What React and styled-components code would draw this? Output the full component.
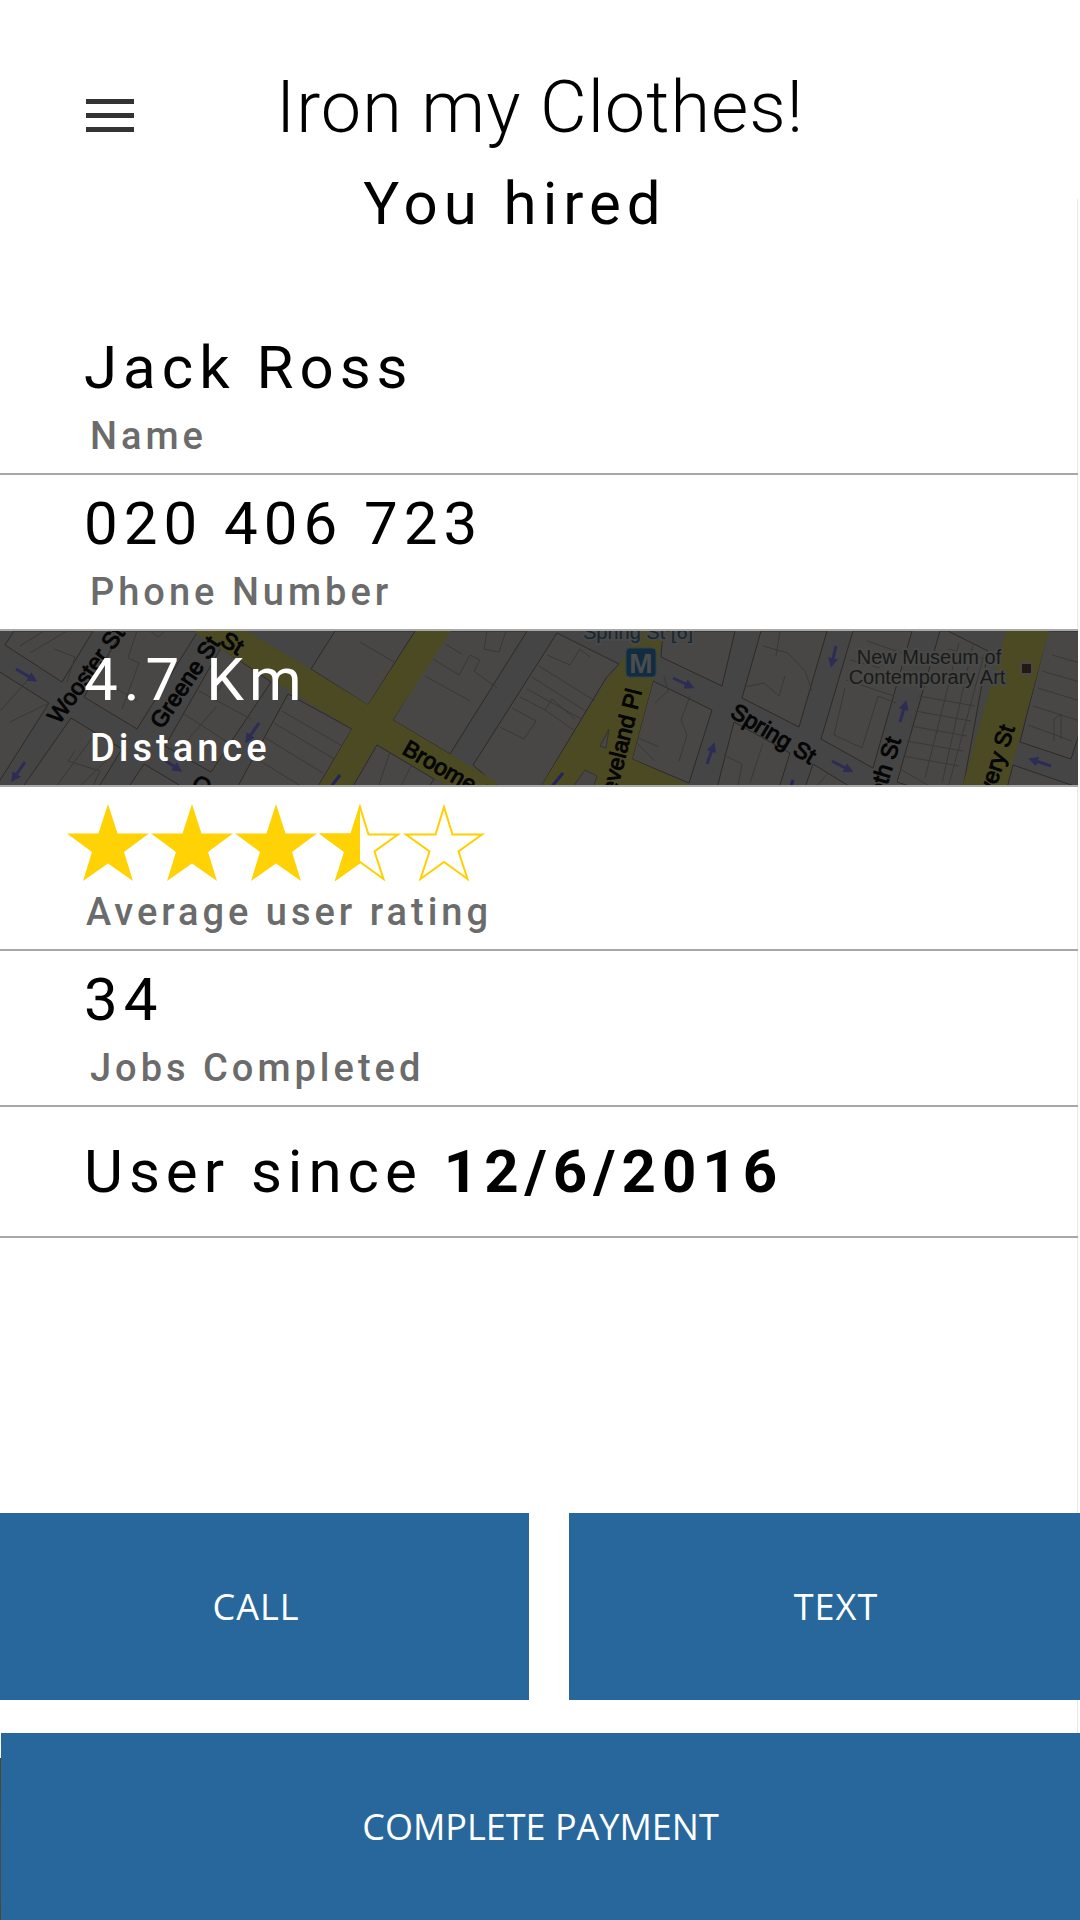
import React from 'react';
import styled, { createGlobalStyle } from 'styled-components';

const GlobalStyle = createGlobalStyle`
  *, *::before, *::after { box-sizing: border-box; }
  body { margin: 0; background: #fff; color: #000; font-family: Roboto, "Liberation Sans", sans-serif; }
  h1, h2, dl, dt, dd, p { margin: 0; }
`;

const Page = styled.div`
  display: flex;
  flex-direction: column;
  min-height: 100vh;
`;

const Header = styled.header`
  display: grid;
  grid-template-columns: 1fr auto 1fr;
  align-items: center;
  padding: 64px 86px 0;
`;

const MenuButton = styled.button`
  justify-self: start;
  display: flex;
  flex-direction: column;
  gap: 9px;
  width: 48px;
  margin-top: 14px;
  padding: 0;
  border: 0;
  background: none;
  cursor: pointer;
`;

const MenuBar = styled.span`
  display: block;
  width: 100%;
  height: 5px;
  background: #333;
`;

const AppName = styled.h1`
  font-size: 72px;
  font-weight: 300;
  line-height: 88px;
  letter-spacing: 1px;
  white-space: nowrap;
`;

const Main = styled.main`
  flex: 1;
  display: flex;
  flex-direction: column;
  background: linear-gradient(#e8e8e8, #e8e8e8) right 2px bottom / 1px calc(100% - 47px) no-repeat;
`;

const Status = styled.h2`
  padding: 16px 50px 79px 0;
  font-size: 60px;
  font-weight: 400;
  line-height: 72px;
  letter-spacing: 6px;
  text-align: center;
`;

const Details = styled.dl`
  padding-right: 2px;
`;

const Row = styled.div`
  position: relative;
  isolation: isolate;
  display: flex;
  flex-direction: column-reverse;
  gap: ${(p) => (p.$rating ? 0 : 6)}px;
  padding: ${(p) => (p.$rating ? '17px 84px 13px' : '11px 84px 13px')};
  border-bottom: 2px solid #a8a8a8;
  overflow: hidden;
  color: ${(p) => (p.$inverse ? '#fff' : '#000')};
`;

const Label = styled.dt`
  padding-left: ${(p) => (p.$flush ? 2 : 6)}px;
  color: ${(p) => (p.$inverse ? '#fff' : '#6b6b6b')};
  font-size: 38px;
  font-weight: 500;
  line-height: 48px;
  letter-spacing: 4px;
`;

const Value = styled.dd`
  font-size: 60px;
  line-height: 76px;
  letter-spacing: 6px;
`;

const Since = styled.p`
  padding: 27px 84px 26px;
  border-bottom: 2px solid #a8a8a8;
  margin-right: 2px;
  font-size: 60px;
  line-height: 76px;
  letter-spacing: 6px;
`;

const MapArt = styled.svg`
  position: absolute;
  z-index: -1;
  inset: 0;
  width: 100%;
  height: 100%;
`;

const Stars = styled.svg`
  display: block;
  width: 420px;
  height: 82px;
  margin: 0 0 2px -18px;
`;

const Actions = styled.div`
  display: grid;
  grid-template-columns: 529fr 511fr;
  gap: 33px 40px;
  margin-top: auto;
`;

const Action = styled.button`
  height: 187px;
  padding: ${(p) => p.$pad || '0'};
  border: 0;
  background: #28679c;
  color: #fff;
  font-family: "Open Sans", "Noto Sans", sans-serif;
  font-size: 36px;
  line-height: 48px;
  letter-spacing: ${(p) => (p.$wide ? 0 : 1)}px;
  cursor: pointer;
`;

const Footer = styled.div`
  grid-column: 1 / -1;
  display: grid;
  padding-left: 1px;
  background: linear-gradient(#4b491f, #4c4845 40%, #4b4845 85%, #4b491f) left bottom / 1px 162px no-repeat;
`;

const STAR = 'M41 0 L50.5 29.5 H82 L57 48 L66 77 L41 59.5 L16 77 L25 48 L0 29.5 H31.5 Z';
const STAR_LINE = 'M41 3 L49.5 30.5 H79 L55.5 47.5 L64.5 75 L41 58 L17.5 75 L26.5 47.5 L3 30.5 H32.5 Z';
const FILLS = [1, 1, 1, 0.5, 0];

function Rating() {
  return (
    <Stars viewBox="0 0 420 82" role="img" aria-label="3.5 out of 5 stars">
      <clipPath id="half"><rect x="0" y="0" width="41" height="82" /></clipPath>
      {FILLS.map((fill, i) => (
        <g key={i} transform={`translate(${1 + i * 84} 0)`}>
          {fill < 1 && <path d={STAR_LINE} fill="none" stroke="#ffd000" strokeWidth="2" />}
          {fill > 0 && <path d={STAR} fill="#ffd205" clipPath={fill < 1 ? 'url(#half)' : undefined} />}
        </g>
      ))}
    </Stars>
  );
}

const BLOCKS = [
  'M14 0 L5 14 L62 51 L93 0 Z',
  'M-5 38 L49 72 L-5 157 Z',
  'M122 0 L84 66 L137 98 L198 0 Z',
  'M71 87 L122 118 L98 157 L22 157 Z',
  'M221 17 L271 51 L211 141 L165 115 Z',
  'M144 133 L184 157 H128 Z',
  'M288 63 L352 98 L317 157 H237 Z',
  'M311 38 L335 0 H415 L368 74 Z',
  'M448 0 L393 89 L450 123 L527 0 Z',
  'M377 114 L434 148 L428 157 H352 Z',
  'M557 2 L619 33 L606 47 L540 157 H500 L473 134 Z',
  'M663 0 L661 26 L722 55 L735 0 Z',
  'M653 50 L712 79 L689 152 L632 128 Z',
  'M761 0 L742 67 L799 96 L827 0 Z',
  'M853 0 L821 108 L873 137 L912 0 Z',
  'M940 0 L897 151 L915 157 H963 L988 20 L948 0 Z',
  'M1048 0 L1020 111 L1071 128 L1090 70 V0 Z',
  'M734 91 L790 122 L779 157 H717 Z',
  'M813 133 L852 157 H805 Z',
  'M1013 134 L1080 157 H1007 Z',
];

// Centre lines of the main roads.
const ROADS = [
  'M203 -10 L219 0 L300 49 L385 101 L490 164',
  'M440 -10 L380 82 L364 106 L328 168',
];

const LOTS = 'M20 15 L44 0 M30 22 L67 0 M67 51 L75 26 L54 18 M0 80 L27 50 M10 91 L49 72 '
  + 'M137 0 L128 27 L139 32 L122 78 M108 52 L137 70 M150 0 L158 6 L165 0 '
  + 'M184 83 L232 114 M199 60 L251 88 M236 31 L218 60 M180 118 L216 76 M75 120 L68 130 L100 140 L92 157 '
  + 'M110 126 L78 157 M92 107 L55 157 M282 80 L344 116 M274 92 L334 128 M264 106 L323 142 M252 125 L304 157 '
  + 'M360 11 L394 31 M433 28 L459 44 L470 24 L480 29 L474 40 L497 57 '
  + 'M425 45 L470 70 M445 13 L462 23 M487 0 L484 18 L499 21 L506 0 M547 24 L570 34 L580 18 L590 26 '
  + 'M539 35 L603 75 M532 46 L595 86 M527 58 L585 90 M520 66 L545 79 L552 68 L575 88 M512 77 L536 90 L524 108 L500 96 '
  + 'M545 79 L575 100 M664 45 L668 60 L655 72 M690 65 L681 89 L687 104 L679 130 M634 105 L659 116 M637 112 L655 130 '
  + 'M763 15 L788 22 L805 40 L812 60 M745 56 L764 52 L779 65 L785 45 M780 0 L776 25 M850 29 L880 37 M846 49 L894 65 '
  + 'M845 57 L834 104 L862 117 L878 65 L896 72 M867 10 L902 22 M959 12 L925 147 M973 14 L942 152 M984 24 L948 157 '
  + 'M919 65 L975 75 M915 80 L971 90 M911 95 L967 105 M907 110 L963 120 M903 125 L959 135 M948 18 L985 28 '
  + 'M1052 24 L1080 32 M1042 40 L1080 51 M1038 57 L1080 70 M1033 75 L1080 90 M1028 94 L1072 110 M1054 110 V88 L1061 83 V108 '
  + 'M724 124 L742 133 L738 155 M763 112 L750 152 M900 138 L933 157 M828 142 L815 157 M390 121 L378 157 M412 133 L400 157';

const ARROWS = [
  [16, 38, 33, 48], [25, 131, 14, 147], [259, 92, 248, 108], [166, 130, 178, 138],
  [673, 47, 690, 55], [707, 133, 713, 116], [836, 15, 832, 32], [900, 91, 905, 74],
  [832, 130, 849, 139], [1051, 135, 1033, 129],
];

function StreetMap() {
  return (
    <MapArt viewBox="0 0 1078 154" preserveAspectRatio="xMidYMid slice" aria-hidden="true">
      <defs>
        <marker id="tip" markerWidth="10" markerHeight="10" refX="5" refY="5" orient="auto" markerUnits="userSpaceOnUse">
          <path d="M0 0 L10 5 L0 10 Z" fill="#2d2c55" />
        </marker>
      </defs>
      <rect width="1078" height="160" fill="#454545" />
      <g fill="#494745" stroke="#2e2a27" strokeWidth="1">
        {BLOCKS.map((d) => <path key={d} d={d} />)}
      </g>
      <path d={LOTS} fill="none" stroke="#393837" strokeWidth="1" />
      <g fill="none" stroke="#4c4a22" strokeWidth="29">
        {ROADS.map((d) => <path key={d} d={d} />)}
      </g>
      <path d="M540 157 L606 50 L620 33 L638 0 H664 L653 50 L632 128 L689 154 L690 160 H540 Z" fill="#4c4a22" />
      <path d="M1006 0 H1049 L1006 157 H962 Z" fill="#4c4a22" />
      <path d="M585 139 L597 145 L592 160 H570 Z M609 98 L600 115 L606 117 Z" fill="#484644" stroke="#333" />
      <path d="M330 157 L340 144 M549 159 L563 142 M793 149 L790 158" stroke="#24235c" strokeWidth="3" />
      <g stroke="#2d2c55" strokeWidth="3">
        {ARROWS.map(([x1, y1, x2, y2]) => (
          <line key={`${x1}-${y1}`} x1={x1} y1={y1} x2={x2} y2={y2} markerEnd="url(#tip)" />
        ))}
      </g>
      <g fill="#050505" stroke="#050505" strokeWidth="1" fontFamily="Liberation Sans, sans-serif" fontSize="23">
        <text transform="translate(59 94) rotate(-54)">Wooster St</text>
        <text transform="translate(162 99) rotate(-56)">Greene St</text>
        <text transform="translate(190 156) rotate(32)">Grand St</text>
        <text transform="translate(219 13) rotate(32)">St</text>
        <text transform="translate(401 122) rotate(30)">Broome St</text>
        <text textAnchor="end" transform="translate(642 60) rotate(-76)">Cleveland Pl</text>
        <text transform="translate(729 85) rotate(31)">Spring St</text>
        <text textAnchor="end" transform="translate(901 109) rotate(-73)">Elizabeth St</text>
        <text textAnchor="end" transform="translate(1015 97) rotate(-72)">Bowery St</text>
      </g>
      <g fontFamily="Liberation Sans, sans-serif" stroke="#494948" strokeWidth="4" paintOrder="stroke">
        <text x="583" y="8" fontSize="20" fill="#152634">Spring St [6]</text>
        <g fill="#1a1a1a" fontSize="20" textAnchor="middle">
          <text x="929" y="33">New Museum of</text>
          <text x="927" y="53">Contemporary Art</text>
        </g>
      </g>
      <rect x="626" y="17" width="30" height="29" rx="4" fill="#142c40" stroke="#2a4352" />
      <text x="641" y="42" textAnchor="middle" fontFamily="Liberation Sans, sans-serif" fontWeight="700" fontSize="28" fill="#4a4d4f">M</text>
      <rect x="1021" y="32" width="11" height="11" fill="#201914" stroke="#494744" strokeWidth="2" />
    </MapArt>
  );
}

export default function App() {
  return (
    <Page>
      <GlobalStyle />
      <Header>
        <MenuButton type="button" aria-label="Menu">
          <MenuBar />
          <MenuBar />
          <MenuBar />
        </MenuButton>
        <AppName>Iron my Clothes!</AppName>
      </Header>
      <Main>
        <Status>You hired</Status>
        <Details>
          <Row>
            <Label>Name</Label>
            <Value>Jack Ross</Value>
          </Row>
          <Row>
            <Label>Phone Number</Label>
            <Value>020 406 723</Value>
          </Row>
          <Row $inverse>
            <Label $inverse>Distance</Label>
            <Value>4.7 Km</Value>
            <StreetMap />
          </Row>
          <Row $rating>
            <Label $flush>Average user rating</Label>
            <Value><Rating /></Value>
          </Row>
          <Row>
            <Label>Jobs Completed</Label>
            <Value>34</Value>
          </Row>
        </Details>
        <Since>User since <b>12/6/2016</b></Since>
        <Actions>
          <Action type="button" $pad="0 17px 0 0">CALL</Action>
          <Action type="button" $pad="0 0 0 23px">TEXT</Action>
          <Footer>
            <Action type="button" $wide>COMPLETE PAYMENT</Action>
          </Footer>
        </Actions>
      </Main>
    </Page>
  );
}
